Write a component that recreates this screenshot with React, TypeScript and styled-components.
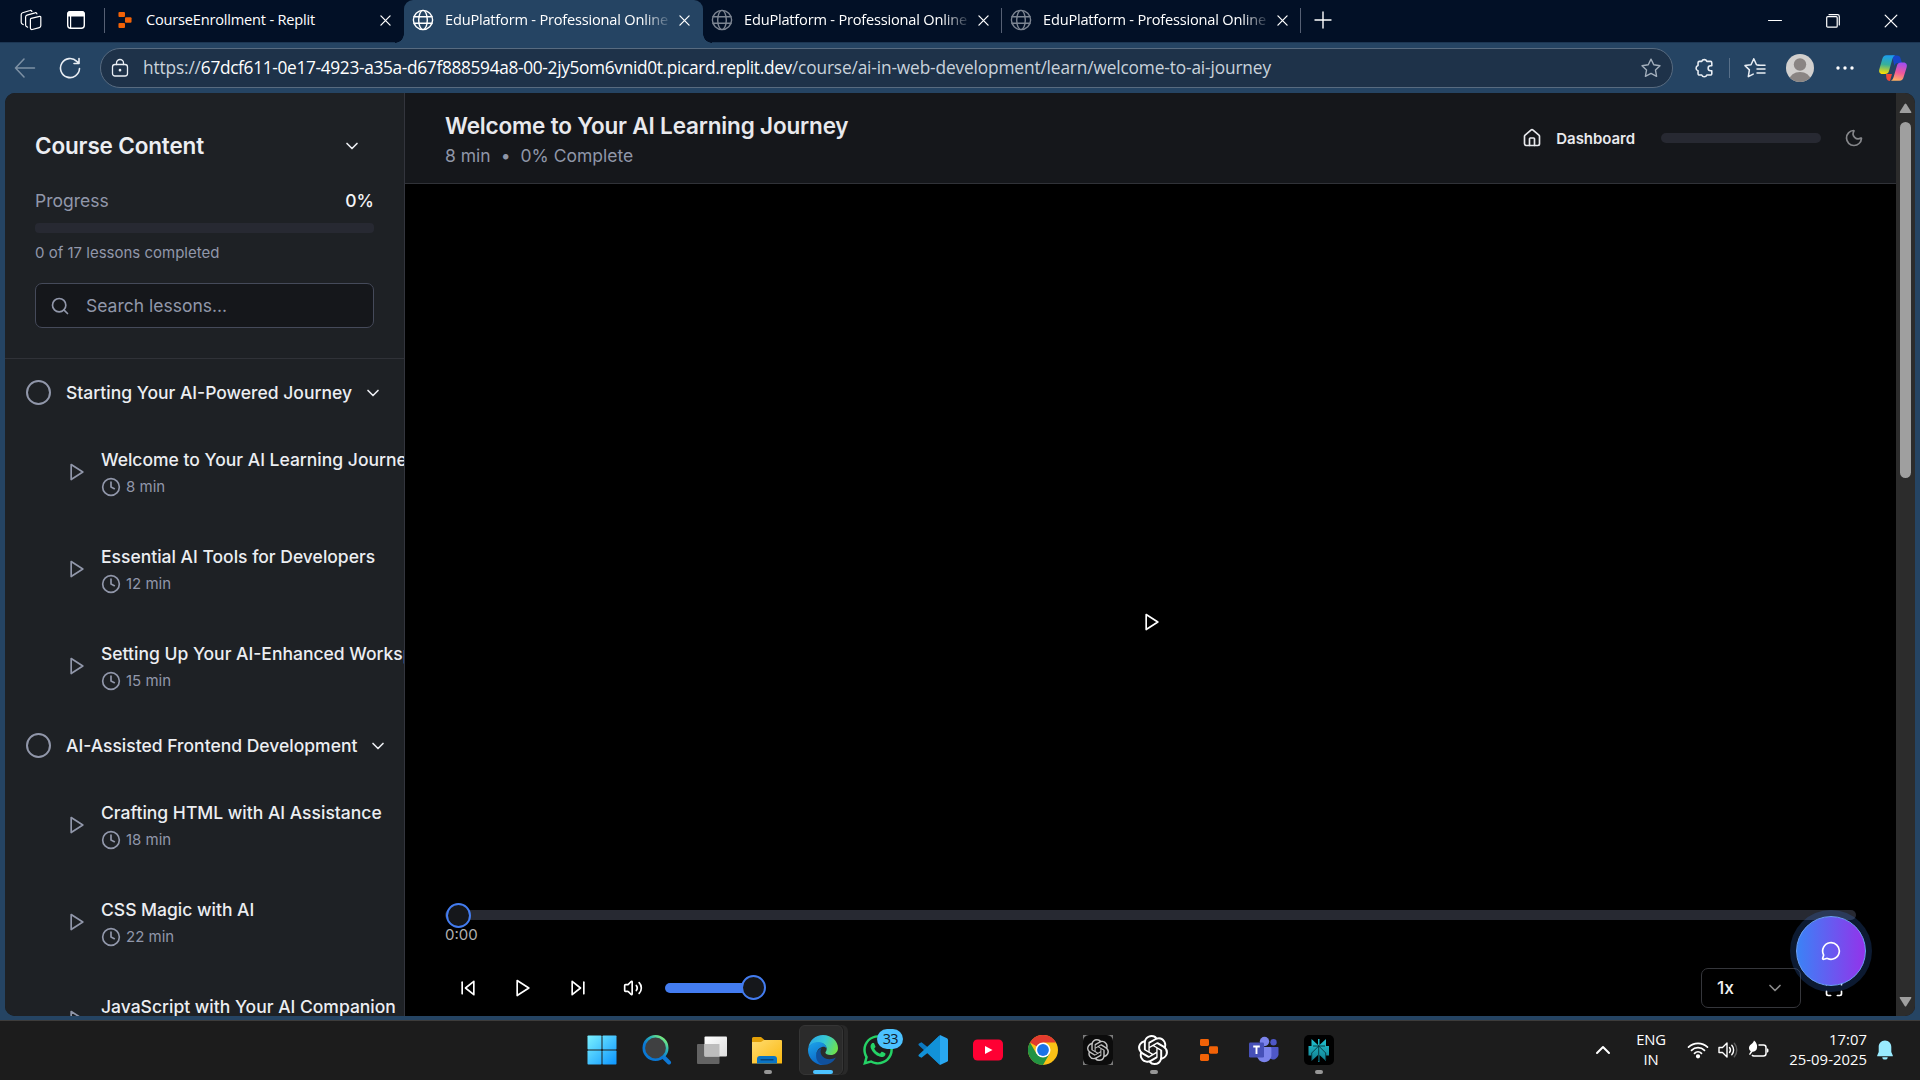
import React from 'react';
import styled, { createGlobalStyle, css } from 'styled-components';
import { ChevronDown, ChevronUp, Clock, House, Maximize, MessageCircle, Moon, Search, Volume2 } from 'lucide-react';
import { SiOpenai } from 'react-icons/si';
import { FaWhatsapp } from 'react-icons/fa';

const Global = createGlobalStyle`
  * { box-sizing: border-box; }
  html, body { margin: 0; padding: 0; background: #254463; overflow: hidden; }
  button { font: inherit; color: inherit; background: none; border: 0; padding: 0; display: flex; align-items: center; justify-content: center; }
`;

const ui = css`font-family: "Open Sans", "Noto Sans", sans-serif;`;
const inter = css`font-family: Inter, "Liberation Sans", sans-serif;`;

const Screen = styled.div`
  width: 1920px; height: 1080px; display: flex; flex-direction: column; background: #254463; overflow: hidden;
`;

/* ---------- browser chrome ---------- */
const TabStrip = styled.div`
  height: 43px; display: flex; background: #021026; border-bottom: 1px solid #1c3653; ${ui} color: #fff; flex: none;
`;
const StripTools = styled.div`
  width: 106px; display: flex; align-items: center; gap: 24px; padding-left: 20px; padding-bottom: 2px; margin-right: 1px;
  > svg { flex: none; }
  > i { margin-left: -6px; }
`;
const Divider = styled.i<{ $h: number; $c?: string }>`
  width: 1px; height: ${p => p.$h}px; background: ${p => p.$c || '#566074'}; flex: none;
`;
const Tab = styled.div<{ $active?: boolean; $sep?: boolean; $w: number }>`
  width: ${p => p.$w}px; height: ${p => (p.$active ? 43 : 42)}px; display: flex; align-items: center; flex: none;
  padding: 0 ${p => (p.$sep ? 0 : 11)}px ${p => (p.$active ? 3 : 2)}px 8px; position: relative;
  > i { margin-left: 10px; }
  ${p => p.$active && css`
    background: #254463; border-radius: 9px 9px 0 0;
    &::before, &::after { content: ''; position: absolute; bottom: 0; width: 9px; height: 9px; }
    &::before { left: -9px; background: radial-gradient(circle at 0 0, #021026 8.5px, #254463 9px); }
    &::after { right: -9px; background: radial-gradient(circle at 100% 0, #021026 8.5px, #254463 9px); }
  `}
`;
const TabTitle = styled.span<{ $fade?: boolean; $gap?: number }>`
  flex: 1; margin-left: ${p => p.$gap ?? 11}px; padding-bottom: 2px; font-size: 14.6px; line-height: 20px; white-space: nowrap; letter-spacing: -0.2px;
  ${p => p.$fade && css`mask-image: linear-gradient(90deg, #000 198px, rgba(0, 0, 0, 0.15) 223px);`}
`;
const CloseBtn = styled.button`width: 16px; height: 20px; margin-left: 4px; padding-top: 1px;`;
const NewTab = styled.button`width: 44px; height: 40px;`;
const WindowButtons = styled.div`margin-left: auto; display: flex;`;
const WinBtn = styled.button`width: 58px; height: 42px;`;

const Toolbar = styled.div`
  height: 50px; flex: none; display: flex; align-items: center; padding-left: 12px; background: #254463; ${ui} color: #e9eef4;
`;
const ToolSlot = styled.div<{ $w: number; $o?: number; $ml?: number }>`
  width: ${p => p.$w}px; height: 40px; margin-left: ${p => p.$ml || 0}px; display: flex; align-items: center; justify-content: center; opacity: ${p => p.$o ?? 1}; flex: none;
`;
const AddressBar = styled.div`
  width: 1573px; height: 40px; border: 1px solid #586b80; border-radius: 20px; background: #1e3249; flex: none;
  display: flex; align-items: center; padding: 0 10px 0 9px; 
`;
const Url = styled.div`
  flex: 1; margin-left: 13px; font-size: 17.3px; line-height: 24px; letter-spacing: -0.14px; color: #c9d2dc; white-space: nowrap;
  b { font-weight: 400; color: #fff; letter-spacing: -0.33px; }
`;

/* ---------- page ---------- */
const Page = styled.div`
  height: 923px; margin: 0 5px; flex: none; display: flex; border-radius: 10px; overflow: hidden; background: #15171b; ${inter}
`;
const Sidebar = styled.aside`
  width: 400px; flex: none; background: #1e2125; border-right: 1px solid #33353d; overflow: hidden; color: #eceef2;
`;
const SideHead = styled.div`
  height: 266px; padding: 30px 30px 0; border-bottom: 1px solid #303238;
`;
const Row = styled.div<{ $h: number; $mt?: number }>`
  height: ${p => p.$h}px; margin-top: ${p => p.$mt || 0}px; display: flex; align-items: center; justify-content: space-between;
`;
const SideTitle = styled.h2`margin: 0; font-size: 22.5px; line-height: 35px; font-weight: 600; letter-spacing: -0.15px;`;
const IconButton = styled.button`width: 45px; height: 45px; flex: none;`;
const ThemeButton = styled(IconButton)`margin-left: 10px; color: #85868a;`;
const Muted = styled.span<{ $s: number }>`font-size: ${p => p.$s}px; color: #9197aa; white-space: nowrap;`;
const Percent = styled.span`font-size: 17.5px; font-weight: 500; color: #f4f5f7;`;
const Track = styled.div<{ $w?: number; $mt?: number; $r?: number }>`
  width: ${p => (p.$w ? p.$w + 'px' : '100%')}; height: 10px; margin-top: ${p => p.$mt || 0}px; border-radius: ${p => p.$r ?? 5}px; background: #272932; flex: none;
`;
const SearchBox = styled.div`
  height: 45px; margin-top: 21px; border: 1px solid #454a5a; border-radius: 7px; background: #15171b; display: flex; align-items: center; gap: 16px;
  padding-left: 14px; color: #9197aa; font-size: 17.5px;
`;
const ModuleList = styled.div`padding-top: 2.5px;`;
const ModuleHead = styled.div`
  height: 62px; display: flex; align-items: center; padding-left: 21px;
`;
const Ring = styled.span`width: 25px; height: 25px; border: 2px solid #9197aa; border-radius: 50%; flex: none;`;
const ModuleTitle = styled.span`
  margin: 0 10.5px 0 15px; font-size: 17.5px; line-height: 25px; font-weight: 500; white-space: nowrap;
`;
const Lesson = styled.div`
  height: 97px; display: flex; align-items: center; gap: 14.5px; padding-left: 61.5px; color: #9197aa;
  > svg { flex: none; }
`;
const LessonTitle = styled.div`font-size: 17.5px; line-height: 25px; font-weight: 500; white-space: nowrap; color: #eceef2;`;
const Duration = styled.div`
  margin-top: 5px; height: 20px; display: flex; align-items: center; gap: 5px; font-size: 15px; line-height: 20px;
`;

const Main = styled.main`flex: 1; display: flex; flex-direction: column; min-width: 0;`;
const Header = styled.header`
  height: 91px; flex: none; border-bottom: 1px solid #303238; background: #15171b; display: flex; align-items: center; padding: 0 20px 0 40px;
`;
const HeadText = styled.div`flex: 1; height: 56px;`;
const PageTitle = styled.h1`margin: 0; font-size: 22.5px; line-height: 31px; font-weight: 600; color: #e8e9ed; letter-spacing: -0.17px;`;
const Meta = styled.div`display: flex; gap: 10px; font-size: 17.5px; line-height: 30px; color: #8f96a8;`;
const DashLink = styled.div`
  display: flex; align-items: center; gap: 14.5px; padding: 0 15px; margin-right: 11px; font-size: 15px; font-weight: 600; color: #e8e9ed; letter-spacing: -0.05px;
`;
const Player = styled.section`flex: 1; background: #000; padding: 0 40px; color: #fff; display: flex; flex-direction: column;`;
const Stage = styled.div`height: 726px; padding: 150px 0 0 2px; display: flex; align-items: center; justify-content: center;`;
const Seek = styled.div<{ $w?: number; $blue?: boolean }>`
  width: ${p => (p.$w ? p.$w + 'px' : '100%')}; height: 10px; border-radius: 5px; background: ${p => (p.$blue ? '#437cf0' : '#272932')};
  display: flex; align-items: center; justify-content: ${p => (p.$blue ? 'flex-end' : 'flex-start')}; flex: none;
`;
const Thumb = styled.span`width: 25px; height: 25px; margin: 0 -0.6px 0 0.6px; border: 2px solid #437cf0; border-radius: 50%; background: #15171b; flex: none;`;
const Time = styled.div`margin-top: 5px; font-size: 15px; line-height: 20px; color: #b0b0b0;`;
const Controls = styled.div`margin-top: 20px; height: 45px; display: flex; align-items: center; gap: 10px;`;
const Speed = styled.div`
  width: 100px; height: 40px; margin-left: auto; border: 1px solid #35363b; border-radius: 7px; display: flex; align-items: center; justify-content: space-between;
  padding: 0 15px; font-size: 17.5px; font-weight: 500; color: #f0f0f0;
  svg { color: #8a8a8a; }
`;
const ChatButton = styled.button`
  position: fixed; left: 1796px; top: 916px; width: 70px; height: 70px; border-radius: 50%; border: 1px solid #6ba0f8; color: #fff;
  background: linear-gradient(90deg, #3b82f6, #9333ea); box-shadow: 0 0 0 6px rgba(59, 130, 246, 0.2);
`;
const Scrollbar = styled.div`
  width: 19px; flex: none; background: #2c2c2c; display: flex; flex-direction: column; align-items: center; padding: 10px 0 9px;
`;
const ScrollThumb = styled.div`width: 11px; height: 356px; margin-top: 8px; margin-bottom: auto; border-radius: 6px; background: #9f9f9f;`;

/* ---------- taskbar ---------- */
const Taskbar = styled.div`
  margin-top: 4px; height: 60px; flex: none; background: #1c1c1c; border-top: 1px solid #3d3c3b; display: flex; color: #fff; ${ui}
`;
const AppRow = styled.div`display: flex; padding-left: 574.5px; flex: 1;`;
const AppCell = styled.div<{ $mark?: 'dot' | 'bar' }>`
  width: 55.15px; height: 58px; display: flex; align-items: center; justify-content: center; position: relative;
  > svg { display: block; position: relative; }
  ${p => p.$mark && css`
    &::after {
      content: ''; position: absolute; top: 49px; left: ${p.$mark === 'bar' ? 18 : 24}px; width: ${p.$mark === 'bar' ? 20 : 8}px; height: 4px;
      border-radius: 2px; background: ${p.$mark === 'bar' ? '#4cc2ff' : '#969696'};
    }
  `}
`;
const ActivePlate = styled.span`
  position: absolute; left: 4px; top: 4px; width: 44px; height: 50px; border-radius: 6px; background: #2b2b2b; border: 1px solid #353535;
  box-shadow: 1px 0 0 #1c1c1c, 5px 0 0 #292929;
`;
const Badge = styled.span`
  position: absolute; left: 27px; top: 8px; width: 26px; height: 20px; border-radius: 10px; background: #4cc2ff; color: #10202c;
  font-size: 14.5px; line-height: 20px; text-align: center; letter-spacing: -0.8px;
`;
const Tray = styled.div`display: flex; align-items: center; height: 58px; padding-right: 17px;`;
const TrayItem = styled.div<{ $w: number }>`width: ${p => p.$w}px; display: flex; justify-content: center; flex: none;`;
const TrayText = styled.div<{ $w: number; $right?: boolean; $ls: number }>`
  width: ${p => p.$w}px; font-size: 14.8px; line-height: 20px; text-align: ${p => (p.$right ? 'right' : 'center')}; white-space: pre; letter-spacing: ${p => p.$ls}px;
  padding-bottom: 2px;
`;

/* ---------- icons ---------- */
const Line: React.FC<{ s: number; w?: number; vb?: number; color?: string; children: React.ReactNode }> = ({ s, w = 1.5, vb = 24, color = 'currentColor', children }) => (
  <svg width={s} height={s} viewBox={`0 0 ${vb} ${vb}`} fill="none" stroke={color} strokeWidth={w} strokeLinecap="round" strokeLinejoin="round">{children}</svg>
);
const PlayIcon = () => <Line s={20} w={2}><polygon points="5 3 19 12 5 21 5 3" /></Line>;
const SkipBackIcon = () => <Line s={20} w={2}><polygon points="19 20 9 12 19 4 19 20" /><path d="M5 19V5" /></Line>;
const SkipNextIcon = () => <Line s={20} w={2}><polygon points="5 4 15 12 5 20 5 4" /><path d="M19 5v14" /></Line>;
const Cross = ({ s = 11, w = 1.4 }) => <Line s={s} vb={12} w={w}><path d="M1 1l10 10M11 1L1 11" /></Line>;
const Globe = ({ color = '#fff' }) => (
  <Line s={22} vb={22} w={1.4} color={color}>
    <circle cx="11" cy="11" r="9.6" /><ellipse cx="11" cy="11" rx="4.3" ry="9.6" /><path d="M2 7.8h18M2 14.2h18" />
  </Line>
);
const ReplitIcon = ({ w = 14, h = 16 }) => (
  <svg width={w} height={h} viewBox="0 0 18 22" fill="#f26207">
    <rect x="0" y="0" width="9" height="7" rx="1.4" /><rect x="9" y="7.3" width="9" height="7.4" rx="1.4" /><rect x="0" y="15" width="9" height="7" rx="1.4" />
  </svg>
);
const WorkspacesIcon = () => (
  <Line s={22} vb={22} w={1.2}>
    <path d="M11.200 9.300l8.400-2a1 1 0 0 1 1.200 1v8.400a2 2 0 0 1-1.500 1.900l-7 1.900a1.500 1.500 0 0 1-1.900-1.400v-8.300a1.500 1.500 0 0 1 .8-1.500z" />
    <path d="M7.600 18.200l-1-.6a2 2 0 0 1-1-1.700V8a2 2 0 0 1 1.400-1.900l8-2.300a1.500 1.500 0 0 1 1.900 1" />
    <path d="M3.200 15.600l-1-.6a2 2 0 0 1-1-1.700V5.600a2 2 0 0 1 1.400-1.900l7.400-2.200a1.500 1.500 0 0 1 1.900 1" />
  </Line>
);
const TabActionsIcon = () => (
  <svg width="20" height="20" viewBox="0 0 20 20"><rect x="1.700" y="1.700" width="16.600" height="16.600" rx="3" fill="none" stroke="#fff" strokeWidth="1.400" /><path d="M1.200 6.500V4a3 3 0 0 1 3-3h11.600a3 3 0 0 1 3 3v2.500z" fill="#fff" /><path d="M4.600 6v12" stroke="#fff" strokeWidth="1.200" /></svg>
);
const Copilot = () => (
  <svg width="30" height="28" viewBox="0 0 30 28">
    <defs>
      <linearGradient id="cpA" x1=".5" y1="0" x2=".4" y2="1"><stop offset="0" stopColor="#1b9df0" /><stop offset=".5" stopColor="#37b09a" /><stop offset="1" stopColor="#ffe000" /></linearGradient>
      <linearGradient id="cpB" x1=".6" y1="0" x2=".4" y2="1"><stop offset="0" stopColor="#a04df0" /><stop offset=".55" stopColor="#f0589a" /><stop offset="1" stopColor="#ffb060" /></linearGradient>
    </defs>
    <path d="M14 1.500h5c2 0 3 1 3.500 2.700L24 9h-4c-2 0-3 1-3.600 3z" fill="#1746c8" />
    <path d="M8 20h6l-2 7c-2 0-3.200-1-3.600-3z" fill="#f0483a" />
    <path d="M8.500 1.200h8.600c-1.600.7-2.200 2-2.800 4L11 17c-.7 2.200-1.800 3-4 3H4.500C1.500 20 .6 17.600 1.400 15l2.800-9.800C5 2.600 6.200 1.200 8.500 1.200z" fill="url(#cpA)" />
    <path d="M21.500 26.800h-8.600c1.600-.7 2.200-2 2.800-4L19 11.500c.7-2.200 1.800-3 4-3h2.500c3 0 3.900 2.400 3.100 5l-2.800 9c-.8 2.900-2 4.300-4.300 4.300z" fill="url(#cpB)" />
  </svg>
);
const Avatar = () => (
  <svg width="28" height="28" viewBox="0 0 28 28"><defs><clipPath id="av"><circle cx="14" cy="14" r="14" /></clipPath></defs>
    <g clipPath="url(#av)"><rect width="28" height="28" fill="#d2d0ce" /><circle cx="14" cy="10.500" r="6.200" fill="#8a8583" /><ellipse cx="14" cy="26" rx="10.500" ry="8" fill="#8a8583" /></g></svg>
);
const WindowsIcon = () => (
  <svg width="30" height="30" viewBox="0 0 30 30"><defs><linearGradient id="win" gradientUnits="userSpaceOnUse" x1="0" y1="0" x2="30" y2="30"><stop offset="0" stopColor="#7df3ff" /><stop offset="1" stopColor="#0a93ff" /></linearGradient></defs>
    <g fill="url(#win)"><rect x=".5" y=".5" width="14" height="14" rx=".8" /><rect x="15.500" y=".5" width="14" height="14" rx=".8" /><rect x=".5" y="15.500" width="14" height="14" rx=".8" /><rect x="15.500" y="15.500" width="14" height="14" rx=".8" /></g></svg>
);
const SearchApp = () => (
  <svg width="30" height="30" viewBox="0 0 30 30"><defs><linearGradient id="sr" x1=".2" y1="1" x2=".9" y2=".1"><stop offset=".4" stopColor="#0a78d4" /><stop offset=".7" stopColor="#28b0b8" /><stop offset="1" stopColor="#7cf07c" /></linearGradient></defs>
    <path d="M21.500 22l5.500 5.500" stroke="#0f78d4" strokeWidth="4" strokeLinecap="round" /><circle cx="13.500" cy="13" r="11.700" fill="#3f4041" stroke="url(#sr)" strokeWidth="2.600" /></svg>
);
const TaskView = () => (
  <svg width="30" height="30" viewBox="0 0 30 30"><defs><linearGradient id="tv" x1="0" y1="0" x2="1" y2="1"><stop offset="0" stopColor="#fff" /><stop offset="1" stopColor="#dedede" /></linearGradient></defs>
    <rect x="0" y="9" width="22.500" height="20" rx="1" fill="#636363" /><rect x="7.500" y="1.500" width="22.500" height="20" rx="1" fill="url(#tv)" /><rect x="7.500" y="9" width="15" height="12.500" fill="#bdbdbd" /></svg>
);
const Folder = () => (
  <svg width="30" height="30" viewBox="0 0 30 30"><defs><linearGradient id="fo" x1="0" y1="0" x2="1" y2="1"><stop offset="0" stopColor="#ffdc70" /><stop offset="1" stopColor="#fbb80f" /></linearGradient></defs>
    <path d="M0 3.500A1.500 1.500 0 0 1 1.500 2H9l3.500 3v6H0z" fill="#e2a008" /><path d="M0 7h9l3-2h17a1 1 0 0 1 1 1v22.500H0z" fill="url(#fo)" />
    <path d="M5 28.500V24a3 3 0 0 1 3-3h14a3 3 0 0 1 3 3v4.500z" fill="#0a74c4" /><path d="M9 24.700h12" stroke="#06457c" strokeWidth="1.400" strokeLinecap="round" /></svg>
);
const Edge = () => (
  <svg width="30" height="30" viewBox="0 0 30 30">
    <defs>
      <linearGradient id="e1" x1="0" y1=".3" x2="1" y2=".6"><stop offset="0" stopColor="#2aa7e8" /><stop offset=".5" stopColor="#36c8d4" /><stop offset="1" stopColor="#6fe24a" /></linearGradient>
      <linearGradient id="e2" x1=".2" y1="0" x2=".6" y2="1"><stop offset="0" stopColor="#1ba0e8" /><stop offset="1" stopColor="#0a63c4" /></linearGradient>
    </defs>
    <path d="M.4 12.500C1.600 5.200 7.600 0 15 0c9 0 15 6.600 15 13 0 4.300-3.300 7-7.300 7-3.400 0-5.300-1.300-5.300-2.500 0-.7 1.300-1.300 1.300-3.700 0-3-3.200-6-7.600-6C6 7.800 1.800 9.500.4 12.500z" fill="url(#e1)" />
    <path d="M28 22.500A15 15 0 0 1 15 30c-6.500 0-8.500-6-7-11 1-3 3-5 5.500-6-.6 1-1 2.200-1 3.500 0 4.500 4.300 7.700 9 7.700 2.300 0 4.500-.8 6.500-1.700z" fill="#10509c" />
    <path d="M15 30C6.500 30 0 23 0 15c0-4.600 4.800-8 10.500-8 4.500 0 8 3 8.100 6.500-1-1.500-2.700-2-4.500-1.500-3.600 1-6 4.500-6 9 0 4.200 2.500 7.800 6.900 9z" fill="url(#e2)" />
  </svg>
);
const VsCode = () => (
  <svg width="30" height="30" viewBox="0 0 30 30">
    <path d="M22 0L9.500 12 3.500 7.300 1 8.500c-.7.400-.7 1.400 0 2L21.500 29.500 22.500 21z" fill="#0b78c0" />
    <path d="M22 30L9.500 18l-6 4.700L1 21.500c-.7-.4-.7-1.400 0-2L21.500.5l1 8.500z" fill="#1292d8" />
    <path d="M22 0l7 3.200a1.800 1.800 0 0 1 1 1.600v20.400a1.800 1.800 0 0 1-1 1.600L22 30z" fill="#29a8f2" />
  </svg>
);
const YouTube = () => (
  <svg width="30" height="30" viewBox="0 0 30 30"><rect y="4.500" width="30" height="21" rx="4.500" fill="#ff0033" /><path d="M12 11l7.500 4-7.500 4z" fill="#fff" /></svg>
);
const Chrome = () => (
  <svg width="30" height="30" viewBox="0 0 30 30">
    <circle cx="15" cy="15" r="15" fill="#fbc116" />
    <path d="M15 15L2 7.500A15 15 0 0 1 28 7.500z" fill="#e33b2e" /><path d="M15 7.500h13L21 15z" fill="#fbc116" />
    <path d="M2 7.500A15 15 0 0 0 15 30l6.500-11.300L15 15 8.500 18.700z" fill="#229342" />
    <circle cx="15" cy="15" r="7.500" fill="#fff" /><circle cx="15" cy="15" r="5.900" fill="#1a73e8" />
  </svg>
);
const ChatGptTile = styled.span`
  width: 30px; height: 30px; background: #7b7b7b; display: flex; overflow: hidden;
  > span { width: 30px; height: 30px; border-radius: 6px; background: #0c0c0c; color: #c2c2c2; display: flex; align-items: center; justify-content: center; }
`;
const Teams = () => (
  <svg width="30" height="30" viewBox="0 0 30 30">
    <circle cx="24.500" cy="7.300" r="3.200" fill="#4f58c8" /><circle cx="15.500" cy="6.500" r="4.700" fill="#7b83eb" />
    <path d="M21 12h7.500c.6 0 1 .4 1 1v6.500a5.500 5.500 0 0 1-8.500 4z" fill="#4f58c8" />
    <path d="M9.500 12H21c.8 0 1.400.6 1.400 1.400v7.600a7.200 7.200 0 0 1-14.300 0z" fill="#7b83eb" />
    <rect x="0" y="7.500" width="15" height="15" rx="1.300" fill="#4650b8" /><path d="M4.200 11.500h6.600M7.500 11.500v7.500" stroke="#fff" strokeWidth="1.900" />
  </svg>
);
const Perplexity = () => (
  <svg width="30" height="30" viewBox="0 0 30 30"><defs><linearGradient id="px" x1="0" y1="0" x2="0" y2="1"><stop offset="0" stopColor="#22c4d2" /><stop offset="1" stopColor="#107a8c" /></linearGradient></defs>
    <rect width="30" height="30" rx="5" fill="#000" />
    <path d="M7.500 4L14 10V4h1.500v6L22 4v7h3v9.500h-3V26l-6.500-6v7H14v-7l-6.500 6v-5.500h-3V11h3z" fill="url(#px)" />
    <path d="M14.700 11l-7 7v7M14.700 11l7 7v7M14.700 10v16M9 11h12" stroke="#06343c" strokeWidth=".9" fill="none" />
  </svg>
);
const Wifi = () => (
  <Line s={22} vb={22} w={1.7}><path d="M1.500 8.200a13.500 13.500 0 0 1 19 0M4.500 11.300a9.200 9.200 0 0 1 13 0M7.500 14.300a5 5 0 0 1 7 0" /><circle cx="11" cy="17.300" r="1.300" fill="#fff" /></Line>
);
const Sound = () => (
  <Line s={22} vb={22} w={1.4}><path d="M2 8.500v5h3.500L10 18V4L5.500 8.500z" /><path d="M12.500 8.500a4 4 0 0 1 0 5M14.800 6.300a7 7 0 0 1 0 9.400" /><path d="M17.300 4.200a10.500 10.500 0 0 1 0 13.600" stroke="#5c5c5c" /></Line>
);
const Battery = () => (
  <svg width="22" height="22" viewBox="0 0 22 22"><path d="M11.500 6h5A2.500 2.500 0 0 1 19 8.500v6a2.500 2.500 0 0 1-2.500 2.500h-9A2.500 2.500 0 0 1 5 16" fill="none" stroke="#fff" strokeWidth="1.500" /><path d="M20 9.500c1.200 0 1.500.5 1.500 2s-.3 2-1.500 2z" fill="#fff" /><path d="M7 1.500c2.500 2 3.500 4.500 3 7.500-.4 2.500-2.200 3.800-4.500 3.800L3 16l-1-.7 1.800-3C1.500 10.500 1.500 8 3 6.200 4.500 4.700 6.500 4 7 1.500z" fill="#fff" /></svg>
);
const Bell = () => (
  <svg width="18" height="22" viewBox="0 0 18 22"><path d="M9 1.500c4 0 6.300 3 6.300 6.500v5l1.500 3.500v.7H1.200v-.7L2.700 13V8C2.700 4.500 5 1.500 9 1.500z" fill="#99ebff" /><path d="M6.300 18.200h5.400a2.700 2.300 0 0 1-5.400 0z" fill="#99ebff" /></svg>
);
const ArrowUp = () => <svg width="13" height="11" viewBox="0 0 13 11"><path d="M5.700 1q.8-1 1.600 0l5 8q.5 1-.7 1H1.400q-1.200 0-.7-1z" fill="#9f9f9f" /></svg>;
const ArrowDown = () => <svg width="13" height="11" viewBox="0 0 13 11"><path d="M5.700 10q.8 1 1.600 0l5-8q.5-1-.7-1H1.400Q.2 1 .7 2z" fill="#9f9f9f" /></svg>;

/* ---------- data ---------- */
const modules = [
  { title: 'Starting Your AI-Powered Journey', lessons: [['Welcome to Your AI Learning Journey', '8 min'], ['Essential AI Tools for Developers', '12 min'], ['Setting Up Your AI-Enhanced Workspace', '15 min']] },
  { title: 'AI-Assisted Frontend Development', lessons: [['Crafting HTML with AI Assistance', '18 min'], ['CSS Magic with AI', '22 min'], ['JavaScript with Your AI Companion', '']] },
];
const apps: { icon: React.ReactNode; mark?: 'dot' | 'bar' }[] = [
  { icon: <WindowsIcon /> }, { icon: <SearchApp /> }, { icon: <TaskView /> }, { icon: <Folder />, mark: 'dot' },
  { icon: <><ActivePlate /><Edge /></>, mark: 'bar' },
  { icon: <><FaWhatsapp size={34} color="#25d366" /><Badge>33</Badge></> },
  { icon: <VsCode /> }, { icon: <YouTube /> }, { icon: <Chrome /> },
  { icon: <ChatGptTile><span><SiOpenai size={22} /></span></ChatGptTile> },
  { icon: <SiOpenai size={30} />, mark: 'dot' },
  { icon: <ReplitIcon w={18} h={22} /> }, { icon: <Teams /> }, { icon: <Perplexity />, mark: 'dot' },
];
const eduTitle = 'EduPlatform - Professional Online';

export default function App() {
  return (
    <>
      <Global />
      <Screen>
        <TabStrip>
          <StripTools><WorkspacesIcon /><TabActionsIcon /><Divider $h={25} /></StripTools>
          <Tab $w={297}>
            <ToolSlot $w={22} $ml={-1}><ReplitIcon /></ToolSlot>
            <TabTitle $gap={10}>CourseEnrollment - Replit</TabTitle>
            <CloseBtn><Cross /></CloseBtn>
          </Tab>
          <Tab $w={299} $active><Globe /><TabTitle $fade>{eduTitle}</TabTitle><CloseBtn><Cross /></CloseBtn></Tab>
          <Tab $w={299} $sep><Globe color="#7d8592" /><TabTitle $fade>{eduTitle}</TabTitle><CloseBtn><Cross /></CloseBtn><Divider $h={25} /></Tab>
          <Tab $w={299} $sep><Globe color="#7d8592" /><TabTitle $fade>{eduTitle}</TabTitle><CloseBtn><Cross /></CloseBtn><Divider $h={25} /></Tab>
          <NewTab><Line s={18} vb={18} w={1.4}><path d="M9 1v16M1 9h16" /></Line></NewTab>
          <WindowButtons>
            <WinBtn><Line s={14} vb={14} w={1}><path d="M.5 6.500h13" /></Line></WinBtn>
            <WinBtn><Line s={14} vb={14} w={1.2}><rect x=".7" y="2.700" width="10.500" height="10.500" rx="1" /><path d="M3 .7h8.500a1.800 1.800 0 0 1 1.800 1.800V11" /></Line></WinBtn>
            <WinBtn><Cross s={14} w={1.1} /></WinBtn>
          </WindowButtons>
        </TabStrip>

        <Toolbar>
          <ToolSlot $w={26} $o={0.45}><Line s={22} vb={22}><path d="M1.500 11h19M10 2L1.500 11l8.500 9" /></Line></ToolSlot>
          <ToolSlot $w={60} $ml={2}><Line s={22} vb={22} w={1.6}><path d="M20.500 11.500A9.500 9.500 0 1 1 17.800 4.400L20 6.500M20 1.500v5h-5" /></Line></ToolSlot>
          <AddressBar>
            <Line s={20} vb={20} w={1.3}><rect x="2.500" y="6.500" width="15" height="11.500" rx="2.500" /><path d="M6.500 6.500V5a3.500 3.500 0 0 1 7 0v1.500" /><circle cx="10" cy="12.200" r=".7" fill="currentColor" /></Line>
            <Url>https://<b>67dcf611-0e17-4923-a35a-d67f888594a8-00-2jy5om6vnid0t.picard.replit.dev</b>/course/ai-in-web-development/learn/welcome-to-ai-journey</Url>
            <Line s={22} w={1.5} color="#a3afbc"><path d="M12 2.300l3 6.200 6.800 1-4.900 4.800 1.200 6.800-6.100-3.200-6.100 3.200 1.200-6.800L2.200 9.500l6.800-1z" /></Line>
          </AddressBar>
          <ToolSlot $w={50} $ml={6}>
            <Line s={22} w={1.7}><path d="M9.500 4.800a3 3 0 0 1 5.600 0H19a1.500 1.500 0 0 1 1.500 1.500v3.200h-1.300a2.700 2.700 0 0 0 0 5.400h1.300v3.300a1.500 1.500 0 0 1-1.500 1.500h-3.900a3 3 0 0 1-5.600 0H7a1.500 1.500 0 0 1-1.500-1.500V15a2.900 2.900 0 0 1 0-5.600V6.300A1.500 1.500 0 0 1 7 4.800z" /></Line>
          </ToolSlot>
          <Divider $h={20} $c="#587089" />
          <ToolSlot $w={50}>
            <Line s={22} vb={22} w={1.5}><path d="M16.200 8.200l-3.700-.5L9.800 1.700 7 7.700l-6 .9 4.400 4.300-1.100 6.800 4.900-2.600M13 12h8M13.500 8.200h7.500M13 16h8" /></Line>
          </ToolSlot>
          <ToolSlot $w={40}><Avatar /></ToolSlot>
          <ToolSlot $w={50}><Line s={18} vb={18} w={0}><g fill="#fff"><circle cx="2" cy="9" r="1.700" /><circle cx="9" cy="9" r="1.700" /><circle cx="16" cy="9" r="1.700" /></g></Line></ToolSlot>
          <ToolSlot $w={46}><Copilot /></ToolSlot>
        </Toolbar>

        <Page>
          <Sidebar>
            <SideHead>
              <Row $h={45}><SideTitle>Course Content</SideTitle><IconButton><ChevronDown size={20} /></IconButton></Row>
              <Row $h={25} $mt={20}><Muted $s={17.5}>Progress</Muted><Percent>0%</Percent></Row>
              <Track $mt={10} $r={4} />
              <Row $h={20} $mt={9}><Muted $s={15}>0 of 17 lessons completed</Muted></Row>
              <SearchBox><Search size={20} /><span>Search lessons...</span></SearchBox>
            </SideHead>
            <ModuleList>
              {modules.map(m => (
                <div key={m.title}>
                  <ModuleHead><Ring /><ModuleTitle>{m.title}</ModuleTitle><ChevronDown size={20} /></ModuleHead>
                  {m.lessons.map(([t, d]) => (
                    <Lesson key={t}>
                      <PlayIcon />
                      <div><LessonTitle>{t}</LessonTitle><Duration><Clock size={20} />{d && <span>{d}</span>}</Duration></div>
                    </Lesson>
                  ))}
                </div>
              ))}
            </ModuleList>
          </Sidebar>

          <Main>
            <Header>
              <HeadText>
                <PageTitle>Welcome to Your AI Learning Journey</PageTitle>
                <Meta><span>8 min</span><span>•</span><span>0% Complete</span></Meta>
              </HeadText>
              <DashLink><House size={20} /><span>Dashboard</span></DashLink>
              <Track $w={160} />
              <ThemeButton><Moon size={20} /></ThemeButton>
            </Header>
            <Player>
              <Stage><PlayIcon /></Stage>
              <Seek><Thumb /></Seek>
              <Time>0:00</Time>
              <Controls>
                <IconButton><SkipBackIcon /></IconButton>
                <IconButton><PlayIcon /></IconButton>
                <IconButton><SkipNextIcon /></IconButton>
                <IconButton><Volume2 size={20} /></IconButton>
                <Seek $w={100} $blue><Thumb /></Seek>
                <Speed><span>1x</span><ChevronDown size={20} /></Speed>
                <IconButton><Maximize size={20} /></IconButton>
              </Controls>
            </Player>
          </Main>
          <Scrollbar><ArrowUp /><ScrollThumb /><ArrowDown /></Scrollbar>
        </Page>

        <Taskbar>
          <AppRow>{apps.map((a, i) => <AppCell key={i} $mark={a.mark}>{a.icon}</AppCell>)}</AppRow>
          <Tray>
            <TrayItem $w={30}><ChevronUp size={24} /></TrayItem>
            <TrayText $w={66} $ls={-0.2}>{'ENG\nIN'}</TrayText>
            <TrayItem $w={28}><Wifi /></TrayItem>
            <TrayItem $w={31}><Sound /></TrayItem>
            <TrayItem $w={30}><Battery /></TrayItem>
            <TrayText $w={94} $right $ls={0.05}>{'17:07\n25-09-2025'}</TrayText>
            <TrayItem $w={36}><Bell /></TrayItem>
          </Tray>
        </Taskbar>
        <ChatButton><MessageCircle size={20} /></ChatButton>
      </Screen>
    </>
  );
}
